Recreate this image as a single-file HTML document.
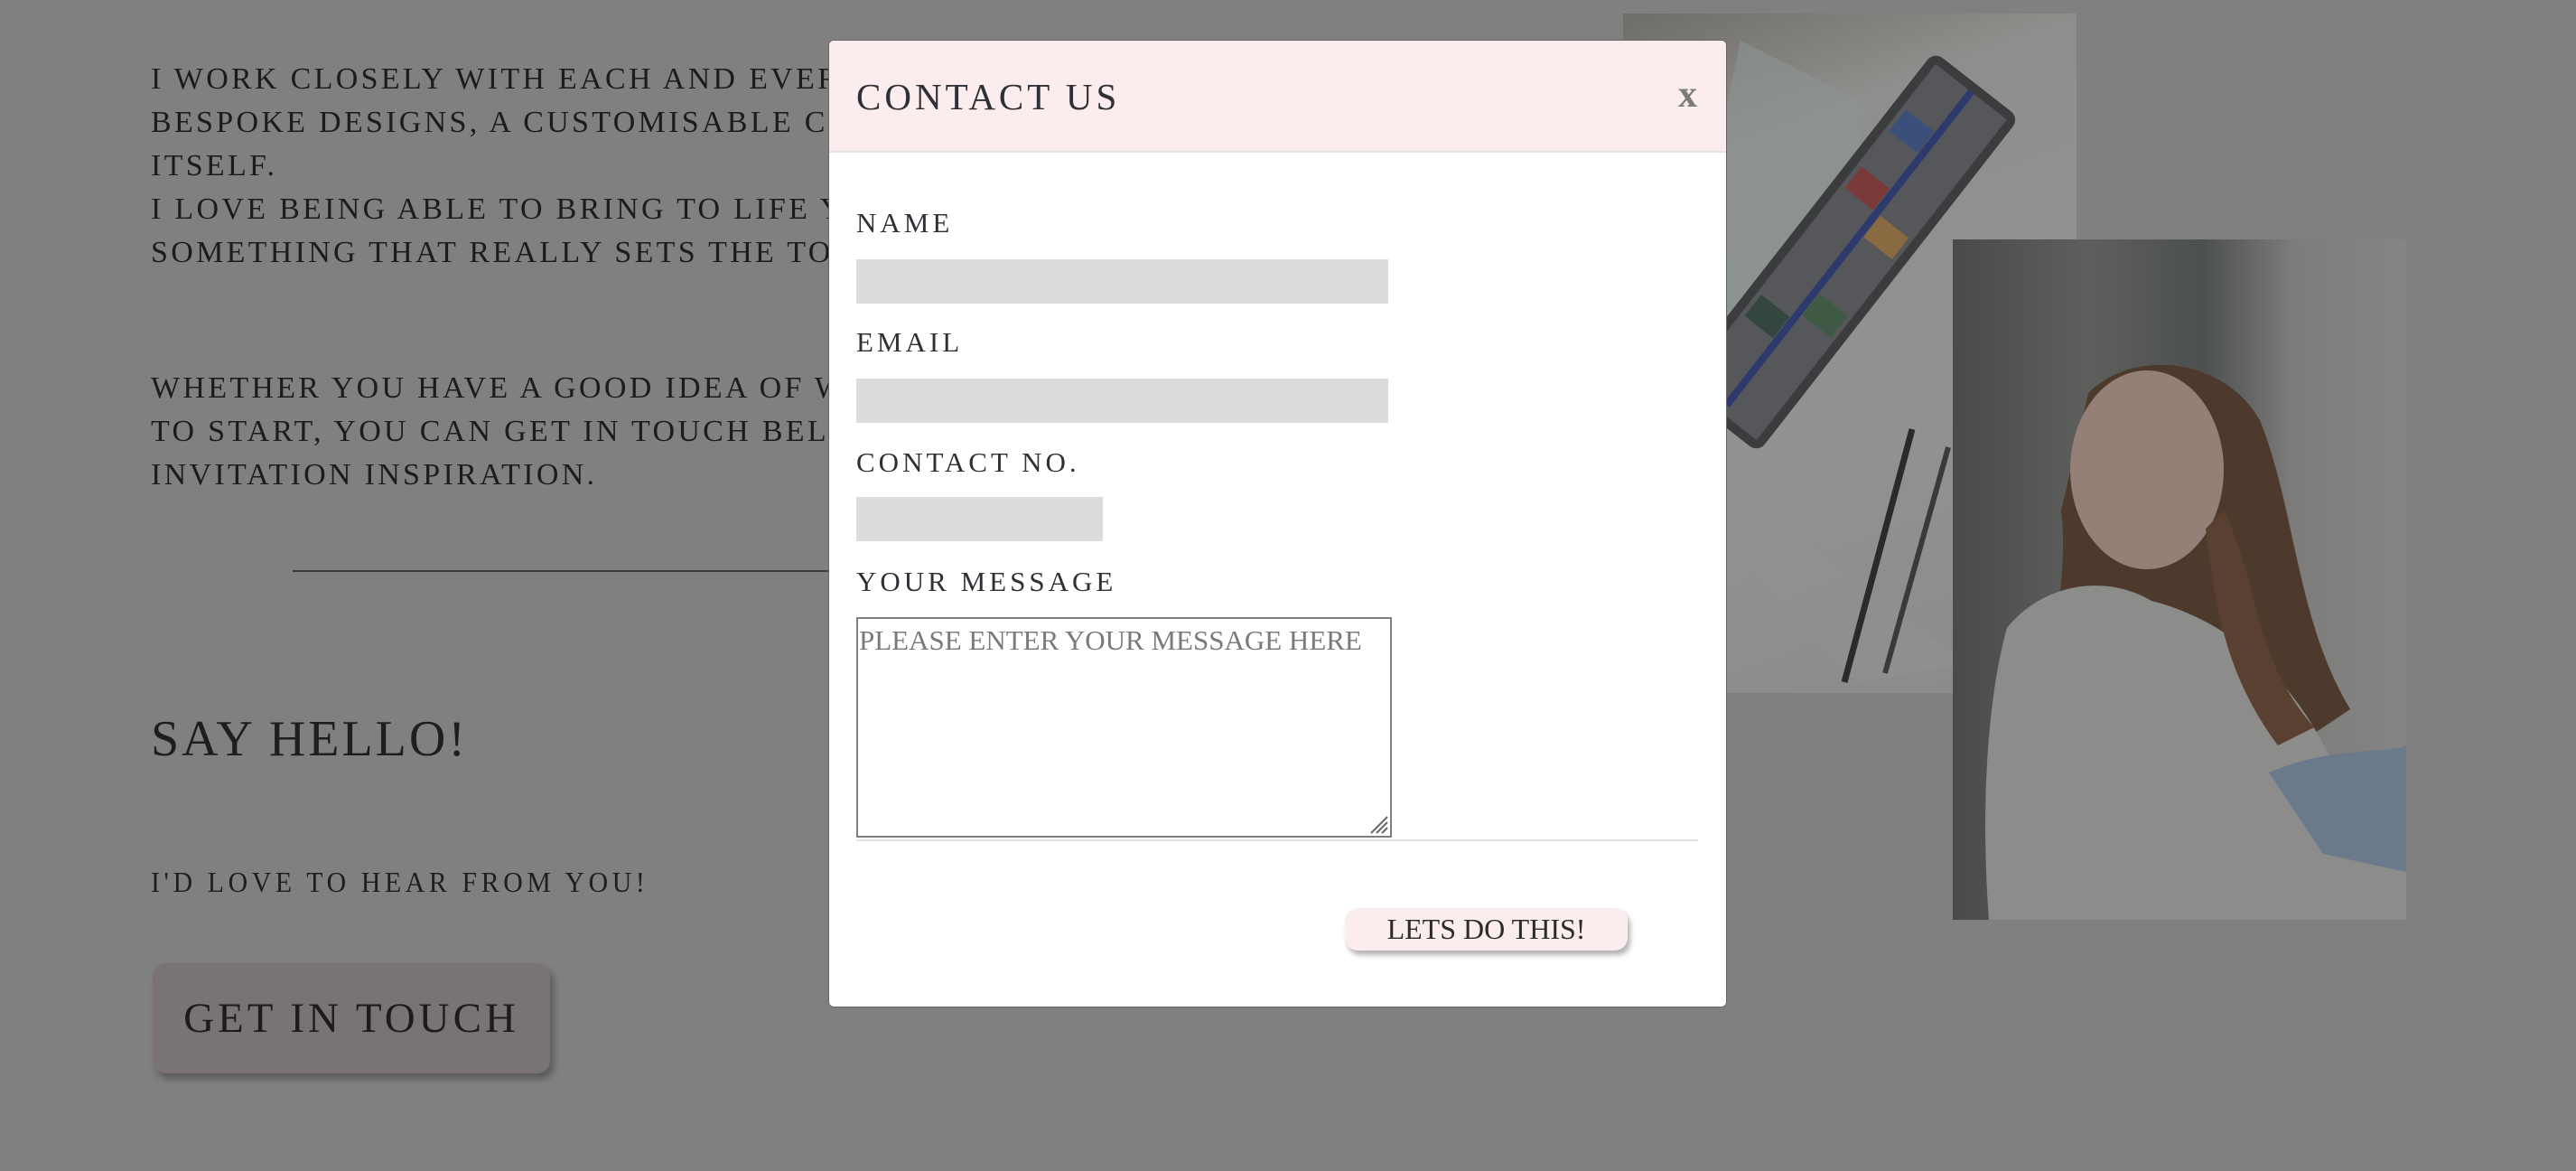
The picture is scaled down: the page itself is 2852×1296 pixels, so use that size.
<!DOCTYPE html>
<html><head><meta charset="utf-8"><style>
*{margin:0;padding:0;box-sizing:border-box}
html,body{width:2852px;height:1296px;overflow:hidden;background:#808080;font-family:"Liberation Serif",serif;position:relative}
.p{position:absolute;left:167px;color:#1c1c1c;font-size:34px;letter-spacing:3.3px;line-height:48px;white-space:nowrap}
.hr{position:absolute;left:324px;top:631px;width:700px;height:2px;background:#3a3a3a}
.say{position:absolute;left:167px;top:786px;font-size:56px;letter-spacing:3px;color:#1e1e1e}
.love{position:absolute;left:167px;top:958px;font-size:32px;letter-spacing:5px;color:#1e1e1e;transform:scaleX(0.93);transform-origin:left}
.git{position:absolute;left:169px;top:1066px;width:440px;height:122px;background:#7a7374;border-radius:14px;box-shadow:4px 6px 8px rgba(0,0,0,.3);color:#1c1c1c;font-size:47px;letter-spacing:4px;text-align:center;line-height:122px}
.img1{position:absolute;left:1797px;top:15px;width:502px;height:752px;background:linear-gradient(160deg,#6f6d68 0%,#8e8e8c 20%,#929290 60%,#8a8a88 100%);overflow:hidden}
.img2{position:absolute;left:2162px;top:265px;width:502px;height:753px;background:linear-gradient(90deg,#4a4a48 0%,#5e5f5d 30%,#4c504f 55%,#7c7c7a 75%,#858583 100%);overflow:hidden}
.modal{position:absolute;left:917px;top:44px;width:995px;height:1071px;background:#fff;border-radius:6px;overflow:hidden;border:1px solid #666}
.hd{height:124px;background:#fbecee;border-bottom:2px solid #e2e2e8;position:relative}
.hd h2{position:absolute;left:30px;top:38px;font-weight:normal;font-size:41px;letter-spacing:4px;color:#2f3036}
.hd .x{position:absolute;right:32px;top:36px;font-size:42px;font-weight:bold;color:#7b7b7b}
.lb{position:absolute;left:30px;font-size:31px;letter-spacing:4px;color:#2f3036}
.in{position:absolute;left:30px;height:49px;background:#dcdcdc}
.ta{position:absolute;left:30px;top:638px;width:593px;height:244px;border:2px solid #7f7f7f}
.ta span{position:absolute;left:1px;top:6px;font-size:31px;color:#7a7a7a;white-space:nowrap}
.line{position:absolute;left:30px;top:884px;width:932px;height:2px;background:#e2e2e8}
.btn{position:absolute;left:571px;top:960px;width:313px;height:47px;background:#fbecee;border-radius:14px;box-shadow:3px 5px 6px rgba(0,0,0,.3);text-align:center;line-height:47px;font-size:32px;color:#2b2b2b}
</style></head><body>
<div class="p" style="top:64px">I WORK CLOSELY WITH EACH AND EVERY COUPLE TO CREATE<br>BESPOKE DESIGNS, A CUSTOMISABLE COLLECTION OR THE STATIONERY<br>ITSELF.<br>I LOVE BEING ABLE TO BRING TO LIFE YOUR VISION AND CREATE<br>SOMETHING THAT REALLY SETS THE TONE FOR YOUR DAY</div>
<div class="p" style="top:406px">WHETHER YOU HAVE A GOOD IDEA OF WHAT YOU WANT OR NOT SURE WHERE<br>TO START, YOU CAN GET IN TOUCH BELOW FOR A CHAT ABOUT YOUR<br>INVITATION INSPIRATION.</div>
<div class="hr"></div>
<div class="say">SAY HELLO!</div>
<div class="love">I'D LOVE TO HEAR FROM YOU!</div>
<div class="git">GET IN TOUCH</div>

<div class="img1">
<svg width="502" height="752" viewBox="0 0 502 752">
<polygon points="130,30 270,100 210,420 60,360" fill="#8c9494" opacity=".6"/>
<g transform="translate(250,260) rotate(38)">
<rect x="-60" y="-230" width="120" height="470" rx="12" fill="#3a3c3e"/>
<rect x="-50" y="-220" width="100" height="450" fill="#55575a"/>
<g fill="#7a3a3a"><rect x="-45" y="-80" width="40" height="30"/><rect x="5" y="-50" width="40" height="30" fill="#8a6a40"/><rect x="-45" y="-160" width="40" height="30" fill="#3a4f7a"/><rect x="5" y="60" width="40" height="30" fill="#3e5a44"/><rect x="-45" y="100" width="40" height="30" fill="#34463e"/></g>
<rect x="-4" y="-220" width="8" height="440" fill="#2c3a6e"/>
</g>
<polygon points="150,540 380,720 260,740 120,600" fill="#8e9292" opacity=".7"/>
<line x1="320" y1="460" x2="245" y2="740" stroke="#2a2a2a" stroke-width="7"/>
<line x1="360" y1="480" x2="290" y2="730" stroke="#3a3a3a" stroke-width="6"/>
</svg></div>

<div class="img2">
<svg width="502" height="753" viewBox="0 0 502 753">
<path d="M150,170 C200,120 300,130 340,200 C380,300 380,420 440,520 L380,560 L120,560 C100,450 130,380 120,300 Z" fill="#4e3a2c"/>
<ellipse cx="215" cy="255" rx="85" ry="110" fill="#958077"/>
<path d="M60,430 C100,380 170,370 220,400 C300,420 380,480 430,600 L502,640 L502,753 L40,753 C30,620 40,500 60,430 Z" fill="#8c8c8a"/>
<path d="M350,590 C420,560 480,570 502,560 L502,700 L410,680 Z" fill="#6a7a8a"/>
<path d="M300,300 C340,380 330,460 400,540 L360,560 C300,480 290,400 280,320 Z" fill="#5a4030"/>
</svg></div>

<div class="modal">
<div class="hd"><h2>CONTACT US</h2><span class="x">x</span></div>
<div class="lb" style="top:184px">NAME</div>
<div class="in" style="top:242px;width:589px"></div>
<div class="lb" style="top:316px">EMAIL</div>
<div class="in" style="top:374px;width:589px"></div>
<div class="lb" style="top:449px">CONTACT NO.</div>
<div class="in" style="top:505px;width:273px"></div>
<div class="lb" style="top:581px">YOUR MESSAGE</div>
<div class="ta"><span>PLEASE ENTER YOUR MESSAGE HERE</span>
<svg style="position:absolute;right:1px;bottom:1px" width="24" height="24"><path d="M22,4 L4,22 M22,10 L10,22 M22,16 L16,22" stroke="#666" stroke-width="2"/></svg></div>
<div class="line"></div>
<div class="btn">LETS DO THIS!</div>
</div>
</body></html>
